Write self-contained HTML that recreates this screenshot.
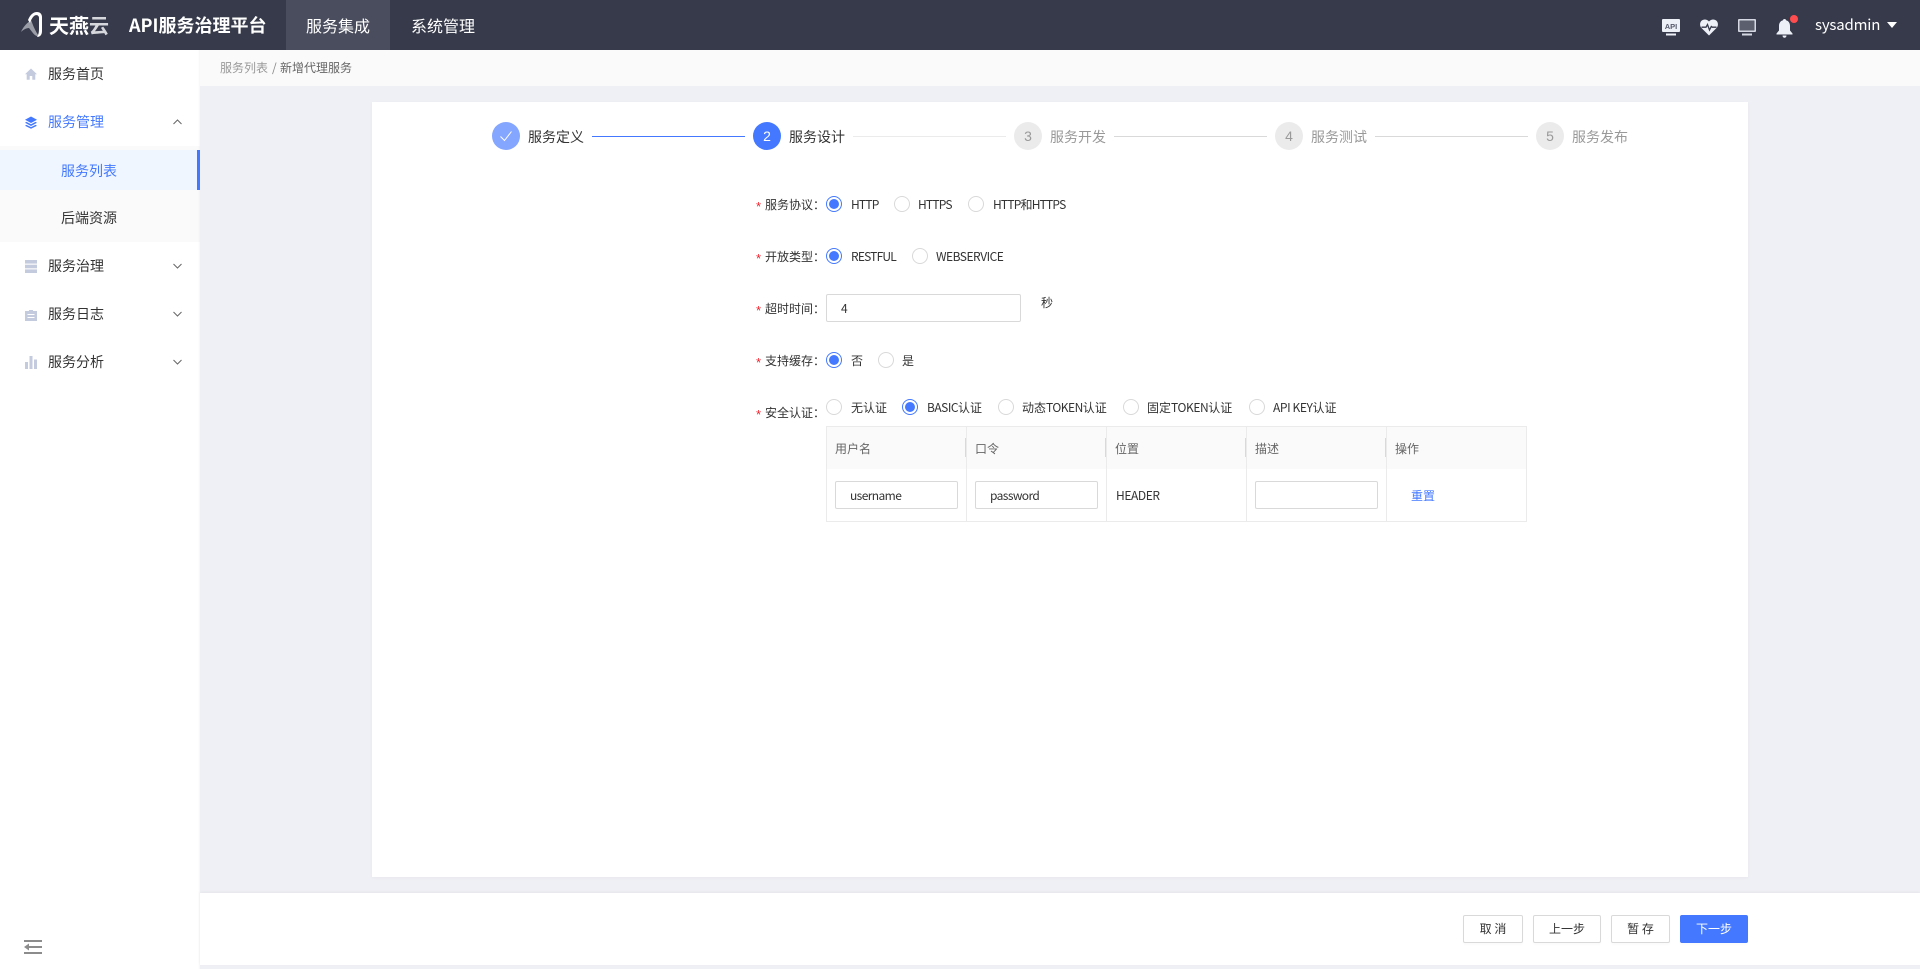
<!DOCTYPE html>
<html lang="zh"><head><meta charset="utf-8"><title>API服务治理平台</title>
<style>
*{box-sizing:border-box;margin:0;padding:0}
html,body{width:1920px;height:969px;overflow:hidden;background:#eff0f5;font-family:"Noto Sans CJK SC","Liberation Sans",sans-serif;color:#333}
.a{position:absolute}
.t{position:absolute;white-space:nowrap;line-height:20px;height:20px;font-size:12px}
.s14{font-size:14px}
.n{letter-spacing:-.6px}
.r{position:absolute;width:16px;height:16px;border:1px solid #d9d9d9;border-radius:50%;background:#fff}
.r.c{border-color:#4479ff}
.r.c:after{content:"";position:absolute;left:2px;top:2px;width:10px;height:10px;border-radius:50%;background:#4479ff}
.i{position:absolute;height:28px;background:#fff;border:1px solid #d9d9d9;border-radius:2px;font-size:12px;line-height:28px;padding-left:14px;color:#333}
.b{position:absolute;top:915px;height:28px;background:#fff;border:1px solid #d9d9d9;border-radius:2px;font-size:12px;line-height:26px;text-align:center;color:#333;box-shadow:0 2px 2px rgba(0,0,0,.02)}
.st{position:absolute;top:122px;width:28px;height:28px;border-radius:50%;background:#ebebeb;color:#999;font-size:14px;line-height:28px;text-align:center;font-family:"Liberation Sans",sans-serif}
.ln{position:absolute;top:136px;height:1px;background:#d9d9d9}
.v{position:absolute;background:#ebebeb}
.dv{position:absolute;top:438px;width:1px;height:19px;background:#d9d9d9}
.star{position:absolute;color:#f5222d;font-size:13px;line-height:20px;height:20px;font-family:"Liberation Sans",sans-serif}
</style></head><body>

<!-- top bar -->
<div class="a" style="left:0;top:0;width:1920px;height:50px;background:#363a4a"></div>
<svg class="a" style="left:20px;top:11px" width="25" height="27" viewBox="0 0 25 27">
<path d="M1 21C3 16 7 12 11 9C13 14 15 20 19 25C15 26 13 22 9 17C6 17 3 19 1 21Z" fill="#9a9ca6"/>
<path d="M8 9C10 4 13 1 17 1C20 1 22 3 22 6V20C22 24 20 26 17 26C19 23 19 20 19 17V7C19 4 16 3.500 14 5C12 7 11 9 10 12Z" fill="#fff"/>
</svg>
<div class="t" style="left:49px;top:14px;font-size:20px;line-height:22px;height:22px;color:#fff;font-weight:700">天燕<span style="color:#d6d7dc">云</span></div>
<div class="t" style="left:129px;top:15px;font-size:18px;font-weight:700;color:#fff;letter-spacing:0">API服务治理平台</div>
<div class="a" style="left:286px;top:0;width:104px;height:50px;background:#4a4d5d"></div>
<div class="t" style="left:306px;top:15px;font-size:16px;color:#fff">服务集成</div>
<div class="t" style="left:411px;top:15px;font-size:16px;color:#fff">系统管理</div>

<svg class="a" style="left:1662px;top:18px" width="18" height="18" viewBox="0 0 18 18">
<path d="M1 1H17A1 1 0 0 1 18 2V13A1 1 0 0 1 17 14H1A1 1 0 0 1 0 13V2A1 1 0 0 1 1 1Z" fill="#eef0f8"/>
<rect x="4" y="15.500" width="10" height="2" fill="#eef0f8"/>
<text x="9" y="11" font-size="7.500" font-weight="700" text-anchor="middle" fill="#555a6b" font-family="Liberation Sans, sans-serif">API</text>
</svg>
<svg class="a" style="left:1700px;top:18px" width="18" height="18" viewBox="0 0 18 18">
<path d="M9 17.500L1.500 10C-.5 8 -.3 4.500 1.500 2.800C3.500 1 6.800 1 9 3.500C11.200 1 14.500 1 16.500 2.800C18.300 4.500 18.500 8 16.500 10Z" fill="#eef0f8"/>
<path d="M1.500 9.200H6L7.500 6.500L9.500 12L11.300 8.500L12.300 9.200H16.500" fill="none" stroke="#363a4a" stroke-width="1.300"/>
</svg>
<svg class="a" style="left:1738px;top:18px" width="18" height="18" viewBox="0 0 18 18">
<path d="M1 1H17A1 1 0 0 1 18 2V13A1 1 0 0 1 17 14H1A1 1 0 0 1 0 13V2A1 1 0 0 1 1 1Z" fill="#d5d8e2"/>
<rect x="1.500" y="2.500" width="15" height="10" rx=".5" fill="#5b5f6e"/>
<rect x="4" y="15.500" width="10" height="2" fill="#d5d8e2"/>
</svg>
<svg class="a" style="left:1776px;top:18px" width="17" height="20" viewBox="0 0 17 20">
<path d="M8.500 1C9.500 1 10 1.600 10 2.300C12.700 3 14 5.300 14 8V12.500L16.500 15.500V16.500H.5V15.500L3 12.500V8C3 5.300 4.300 3 7 2.300C7 1.600 7.500 1 8.500 1Z" fill="#eef0f8"/>
<path d="M6.500 17.500H10.500C10.500 19 9.600 19.700 8.500 19.700S6.500 19 6.500 17.500Z" fill="#eef0f8"/>
</svg>
<div class="a" style="left:1790px;top:15px;width:8px;height:8px;border-radius:50%;background:#ff4d4f"></div>
<div class="t" style="left:1815px;top:15px;font-size:15px;letter-spacing:-.2px;color:#fff">sysadmin</div>
<div class="a" style="left:1887px;top:22px;width:0;height:0;border-left:5px solid transparent;border-right:5px solid transparent;border-top:6px solid #fff"></div>

<!-- sidebar -->
<div class="a" style="left:0;top:50px;width:200px;height:919px;background:#fff"></div>
<div class="a" style="left:0;top:146px;width:200px;height:96px;background:#fafafa"></div>
<div class="a" style="left:0;top:150px;width:200px;height:40px;background:#eff6ff"></div>
<div class="a" style="left:198px;top:50px;width:2px;height:919px;background:linear-gradient(90deg,rgba(0,0,0,0),rgba(0,0,0,.035))"></div>
<div class="a" style="left:197px;top:150px;width:3px;height:40px;background:#4479ff"></div>

<svg class="a" style="left:25px;top:68px" width="12" height="12" viewBox="0 0 12 12"><path d="M6 .5L12 6.300H10.300V11.800H7.300V8H4.700V11.800H1.700V6.300H0Z" fill="#c4cbde"/></svg>
<div class="t s14" style="left:48px;top:64px">服务首页</div>
<svg class="a" style="left:25px;top:116px" width="12" height="13" viewBox="0 0 12 13"><path d="M6 .5L12 3.700L6 7L0 3.700Z" fill="#4479ff"/><path d="M1.500 5.900L6 8.300L10.500 5.900L12 6.700L6 10L0 6.700Z" fill="#4479ff"/><path d="M1.500 8.900L6 11.100L10.500 8.900L12 9.700L6 12.800L0 9.700Z" fill="#4479ff"/></svg>
<div class="t s14" style="left:48px;top:112px;color:#4479ff">服务管理</div>
<svg class="a" style="left:173px;top:119px" width="9" height="6" viewBox="0 0 9 6"><path d="M.5 5L4.500 1L8.500 5" fill="none" stroke="#666" stroke-width="1"/></svg>
<div class="t s14" style="left:61px;top:161px;color:#4479ff">服务列表</div>
<div class="t s14" style="left:61px;top:208px">后端资源</div>
<svg class="a" style="left:25px;top:260px" width="12" height="13" viewBox="0 0 12 13"><rect y="0" width="12" height="3.600" fill="#c4cbde"/><rect y="4.700" width="12" height="3.600" fill="#c4cbde"/><rect y="9.400" width="12" height="3.600" fill="#c4cbde"/></svg>
<div class="t s14" style="left:48px;top:256px">服务治理</div>
<svg class="a" style="left:173px;top:263px" width="9" height="6" viewBox="0 0 9 6"><path d="M.5 1L4.500 5L8.500 1" fill="none" stroke="#666" stroke-width="1"/></svg>
<svg class="a" style="left:25px;top:310px" width="12" height="11" viewBox="0 0 12 11"><path d="M0 1H4V0H8V1H12V11H0Z" fill="#c4cbde"/><rect x="2.500" y="4" width="7" height="1" fill="#fff"/><rect x="2.500" y="7" width="7" height="1" fill="#fff"/></svg>
<div class="t s14" style="left:48px;top:304px">服务日志</div>
<svg class="a" style="left:173px;top:311px" width="9" height="6" viewBox="0 0 9 6"><path d="M.5 1L4.500 5L8.500 1" fill="none" stroke="#666" stroke-width="1"/></svg>
<svg class="a" style="left:25px;top:356px" width="12" height="13" viewBox="0 0 12 13"><rect y="6" width="3" height="7" fill="#c4cbde"/><rect x="4.500" y="0" width="3" height="13" fill="#c4cbde"/><rect x="9" y="3.500" width="3" height="9.500" fill="#c4cbde"/></svg>
<div class="t s14" style="left:48px;top:352px">服务分析</div>
<svg class="a" style="left:173px;top:359px" width="9" height="6" viewBox="0 0 9 6"><path d="M.5 1L4.500 5L8.500 1" fill="none" stroke="#666" stroke-width="1"/></svg>
<svg class="a" style="left:24px;top:940px" width="18" height="14" viewBox="0 0 18 14"><rect width="18" height="2" fill="#8c8c8c"/><rect y="12" width="18" height="2" fill="#8c8c8c"/><rect x="5" y="6" width="13" height="2" fill="#8c8c8c"/><path d="M0 7L5 3.500V10.500Z" fill="#8c8c8c"/></svg>

<!-- breadcrumb -->
<div class="a" style="left:200px;top:50px;width:1720px;height:36px;background:#fafafa"></div>
<div class="t" style="left:220px;top:58px;color:#999">服务列表</div>
<div class="t" style="left:272px;top:58px;color:#888">/</div>
<div class="t" style="left:280px;top:58px;color:#666">新增代理服务</div>

<!-- card -->
<div class="a" style="left:372px;top:102px;width:1376px;height:775px;background:#fff;box-shadow:0 1px 4px rgba(0,0,0,.04)"></div>

<!-- steps -->
<div class="st" style="left:492px;background:#85a6ff"></div>
<svg class="a" style="left:499px;top:129px" width="14" height="14" viewBox="0 0 14 14"><path d="M1.500 7.500L5.500 11.500L12.500 2.500" fill="none" stroke="#fff" stroke-width="1"/></svg>
<div class="t s14" style="left:528px;top:127px">服务定义</div>
<div class="ln" style="left:592px;width:153px;background:#4479ff"></div>
<div class="st" style="left:753px;background:#4479ff;color:#fff">2</div>
<div class="t s14" style="left:789px;top:127px">服务设计</div>
<div class="ln" style="left:853px;width:153px;background:#ebebeb"></div>
<div class="st" style="left:1014px">3</div>
<div class="t s14" style="left:1050px;top:127px;color:#999">服务开发</div>
<div class="ln" style="left:1114px;width:153px"></div>
<div class="st" style="left:1275px">4</div>
<div class="t s14" style="left:1311px;top:127px;color:#999">服务测试</div>
<div class="ln" style="left:1375px;width:153px"></div>
<div class="st" style="left:1536px">5</div>
<div class="t s14" style="left:1572px;top:127px;color:#999">服务发布</div>

<!-- form -->
<div class="star" style="left:756px;top:197px">*</div><div class="t" style="left:765px;top:195px">服务协议：</div>
<div class="r c" style="left:826px;top:196px"></div><div class="t n" style="left:851px;top:195px;letter-spacing:-.8px">HTTP</div>
<div class="r" style="left:894px;top:196px"></div><div class="t n" style="left:918px;top:195px;letter-spacing:-.8px">HTTPS</div>
<div class="r" style="left:968px;top:196px"></div><div class="t n" style="left:993px;top:195px;letter-spacing:-.8px">HTTP和HTTPS</div>

<div class="star" style="left:756px;top:249px">*</div><div class="t" style="left:765px;top:247px">开放类型：</div>
<div class="r c" style="left:826px;top:248px"></div><div class="t n" style="left:851px;top:247px;letter-spacing:-.8px">RESTFUL</div>
<div class="r" style="left:912px;top:248px"></div><div class="t n" style="left:936px;top:247px;letter-spacing:-.5px">WEBSERVICE</div>

<div class="star" style="left:756px;top:301px">*</div><div class="t" style="left:765px;top:299px">超时时间：</div>
<div class="i" style="left:826px;top:294px;width:195px">4</div>
<div class="t" style="left:1041px;top:293px">秒</div>

<div class="star" style="left:756px;top:353px">*</div><div class="t" style="left:765px;top:351px">支持缓存：</div>
<div class="r c" style="left:826px;top:352px"></div><div class="t" style="left:851px;top:351px">否</div>
<div class="r" style="left:878px;top:352px"></div><div class="t" style="left:902px;top:351px">是</div>

<div class="star" style="left:756px;top:405px">*</div><div class="t" style="left:765px;top:403px">安全认证：</div>
<div class="r" style="left:826px;top:399px"></div><div class="t" style="left:851px;top:398px">无认证</div>
<div class="r c" style="left:902px;top:399px"></div><div class="t" style="left:927px;top:398px;letter-spacing:-.5px">BASIC<span style="letter-spacing:0">认证</span></div>
<div class="r" style="left:998px;top:399px"></div><div class="t" style="left:1022px;top:398px">动态<span class="n" style="letter-spacing:-.5px">TOKEN</span>认证</div>
<div class="r" style="left:1123px;top:399px"></div><div class="t" style="left:1147px;top:398px">固定<span class="n" style="letter-spacing:-.4px">TOKEN</span>认证</div>
<div class="r" style="left:1249px;top:399px"></div><div class="t" style="left:1273px;top:398px"><span class="n" style="letter-spacing:-.4px">API KEY</span>认证</div>

<!-- table -->
<div class="a" style="left:826px;top:426px;width:701px;height:96px;border:1px solid #ebebeb;background:#fff"></div>
<div class="a" style="left:827px;top:427px;width:699px;height:42px;background:#fafafa"></div>
<div class="v" style="left:966px;top:427px;width:1px;height:94px"></div>
<div class="v" style="left:1106px;top:427px;width:1px;height:94px"></div>
<div class="v" style="left:1246px;top:427px;width:1px;height:94px"></div>
<div class="v" style="left:1386px;top:427px;width:1px;height:94px"></div>
<div class="dv" style="left:965px"></div><div class="dv" style="left:1105px"></div><div class="dv" style="left:1245px"></div><div class="dv" style="left:1385px"></div>
<div class="t" style="left:835px;top:439px;color:#666">用户名</div>
<div class="t" style="left:975px;top:439px;color:#666">口令</div>
<div class="t" style="left:1115px;top:439px;color:#666">位置</div>
<div class="t" style="left:1255px;top:439px;color:#666">描述</div>
<div class="t" style="left:1395px;top:439px;color:#666">操作</div>
<div class="i n" style="left:835px;top:481px;width:123px">username</div>
<div class="i n" style="left:975px;top:481px;width:123px">password</div>
<div class="t" style="left:1116px;top:486px;letter-spacing:-.4px">HEADER</div>
<div class="i" style="left:1255px;top:481px;width:123px"></div>
<div class="t" style="left:1411px;top:486px;color:#4479ff">重置</div>

<!-- footer -->
<div class="a" style="left:200px;top:893px;width:1720px;height:72px;background:#fff;box-shadow:0 -1px 3px rgba(0,0,0,.05)"></div>
<div class="b" style="left:1463px;width:60px">取 消</div>
<div class="b" style="left:1533px;width:68px">上一步</div>
<div class="b" style="left:1611px;width:59px">暂 存</div>
<div class="b" style="left:1680px;width:68px;background:#4479ff;border-color:#4479ff;color:#fff">下一步</div>
</body></html>
